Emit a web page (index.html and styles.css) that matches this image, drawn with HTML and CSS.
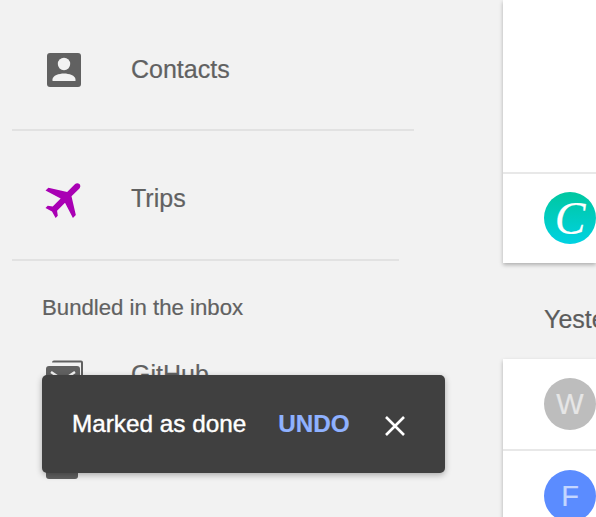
FILE: index.html
```html
<!DOCTYPE html>
<html lang="en">
<head>
<meta charset="utf-8">
<title>Inbox</title>
<link rel="stylesheet" href="styles.css">
</head>
<body>
<div class="page">
  <nav class="nav">
    <div class="row row-contacts">
      <span class="icon">
        <svg width="36" height="36" viewBox="0 0 36 36"><rect x="2" y="1" width="34" height="34" rx="3" fill="#616161"/><circle cx="19" cy="12" r="6.2" fill="#f2f2f2"/><path d="M7.5 29v-1.500C7.500 23.500 14 21.500 19 21.500s11.500 2 11.500 6V29z" fill="#f2f2f2"/></svg>
      </span>
      <span class="label">Contacts</span>
    </div>
    <div class="rule rule-long"></div>
    <div class="row row-trips">
      <span class="icon">
        <svg width="44" height="44" viewBox="0 0 44 44"><g transform="translate(20 21.500) rotate(45) scale(2.04) translate(-11.500 -12)"><path d="M21 16v-2l-8-5V3.500c0-.83-.67-1.500-1.500-1.500S10 2.670 10 3.500V9l-8 5v2l8-2.500V19l-2 1.500V22l3.500-1 3.500 1v-1.500L13 19v-5.500l8 2.500z" fill="#a900b4"/></g></svg>
      </span>
      <span class="label">Trips</span>
    </div>
    <div class="rule rule-short"></div>
    <h2 class="section">Bundled in the inbox</h2>
    <div class="row row-github">
      <span class="icon">
        <svg width="40" height="40" viewBox="0 0 40 40"><path d="M7 2.500a2 2 0 0 1 2-2h27a2 2 0 0 1 2 2v27h-2V2.500H7z" fill="#616161"/><rect x="1" y="6" width="34" height="34" rx="3" fill="#616161"/><path d="M6 12l12 8 12-8" fill="none" stroke="#f2f2f2" stroke-width="2.500"/></svg>
      </span>
      <span class="label">GitHub</span>
    </div>
    <div class="row-next"><span class="next-icon"></span></div>
  </nav>
  <main class="stream">
    <section class="card card-top">
      <div class="card-blank"></div>
      <div class="mail"><span class="avatar avatar-canva">C</span></div>
    </section>
    <h2 class="day">Yesterday</h2>
    <section class="card">
      <div class="mail"><span class="avatar avatar-w">W</span></div>
      <div class="mail"><span class="avatar avatar-f">F</span></div>
    </section>
  </main>
  <div class="toast">
    <span class="toast-text">Marked as done</span>
    <span class="toast-undo">UNDO</span>
    <svg class="toast-close" width="22" height="22" viewBox="0 0 22 22"><path d="M2 2l18 18M20 2L2 20" stroke="#fff" stroke-width="2.600" fill="none"/></svg>
  </div>
</div>
</body>
</html>
```

FILE: styles.css
```css
* { box-sizing: border-box; }
html, body { margin: 0; padding: 0; }
body {
  width: 596px;
  height: 517px;
  overflow: hidden;
  background: #f2f2f2;
  font-family: "Liberation Sans", Arial, sans-serif;
  color: #616161;
  -webkit-text-stroke: 0.2px currentColor;
}
.page {
  position: relative;
  display: flex;
  width: 596px;
  height: 517px;
  overflow: hidden;
}
.nav {
  flex: 0 0 503px;
  display: flex;
  flex-direction: column;
}
.row {
  display: flex;
  align-items: center;
  padding-left: 45px;
  flex: none;
}
.row-contacts { height: 129px; padding-top: 10px; }
.row-trips { height: 128px; padding-top: 8px; }
.row-github { height: 40px; margin-top: 39px; align-items: flex-start; }
.icon {
  flex: 0 0 86px;
  display: flex;
  align-items: center;
}
.label { font-size: 25px; line-height: 30px; margin-bottom: 2px; }
.row-github .label { margin: -1px 0 0; }
.rule { height: 2px; background: #e2e2e2; margin-left: 12px; flex: none; }
.rule-long { width: 402px; }
.rule-short { width: 387px; }
.section {
  margin: 34px 0 0 42px;
  font-size: 22.2px;
  font-weight: 400;
  line-height: 26px;
}
.row-next { padding: 53px 0 0 46px; }
.next-icon {
  display: block;
  width: 32px;
  height: 26px;
  background: #616161;
  border-radius: 3px;
}
.stream {
  flex: 0 0 93px;
  min-width: 0;
}
.card {
  background: #fff;
  box-shadow: 0 2px 4px rgba(0, 0, 0, 0.28);
  width: 93px;
}
.card-blank { height: 172px; }
.mail {
  height: 90px;
  padding: 19px 0 0 41px;
  border-top: 2px solid #e8e8e8;
}
.card-top .mail { height: 91px; padding-top: 18px; }
.card > .mail:first-child { border-top: 0; padding-top: 19px; }
.avatar {
  display: flex;
  align-items: center;
  justify-content: center;
  width: 52px;
  height: 52px;
  border-radius: 50%;
  font-size: 29px;
  flex: none;
}
.avatar-canva {
  background: linear-gradient(180deg, #00c7a0, #00d2e2);
  color: #fff;
  font-family: "Liberation Serif", "Times New Roman", serif;
  font-style: italic;
  font-size: 46px;
}
.avatar-w { background: #bdbdbd; color: #e6e6e6; }
.avatar-f { background: #5b8cff; color: #c4d6ff; }
.day {
  margin: 0;
  height: 96px;
  padding: 41px 0 0 41px;
  font-size: 25px;
  font-weight: 400;
  line-height: 30px;
  color: #5c5c5c;
  white-space: nowrap;
  overflow: hidden;
}
.toast {
  position: absolute;
  left: 42px;
  top: 375px;
  width: 403px;
  height: 98px;
  display: flex;
  align-items: center;
  padding-left: 30px;
  background: #404040;
  border-radius: 5px;
  box-shadow: 0 2px 6px rgba(0, 0, 0, 0.3);
  font-size: 24.3px;
  color: #fff;
}
.toast-text { -webkit-text-stroke: 0.4px #fff; }
.toast-undo {
  margin-left: 32px;
  font-weight: 700;
  color: #8fb1ff;
}
.toast-close { margin: 3px 0 0 34px; flex: none; }
```
